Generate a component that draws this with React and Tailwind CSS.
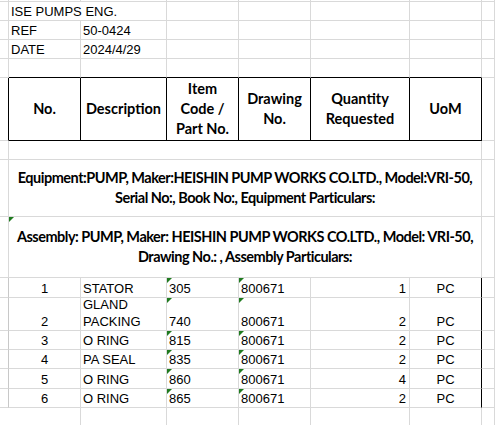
import React from "react";

const line = "border-[#d9d9d9]";

const Flag = () => (
  <span className="absolute left-0 top-0 h-0 w-0 border-t-[5px] border-r-[5px] border-t-[#1f7a1f] border-r-transparent" />
);

const rows = [
  { no: "1", desc: ["STATOR"], code: "305", dwg: "800671", qty: "1", uom: "PC" },
  { no: "2", desc: ["GLAND", "PACKING"], code: "740", dwg: "800671", qty: "2", uom: "PC" },
  { no: "3", desc: ["O RING"], code: "815", dwg: "800671", qty: "2", uom: "PC" },
  { no: "4", desc: ["PA SEAL"], code: "835", dwg: "800671", qty: "2", uom: "PC" },
  { no: "5", desc: ["O RING"], code: "860", dwg: "800671", qty: "4", uom: "PC" },
  { no: "6", desc: ["O RING"], code: "865", dwg: "800671", qty: "2", uom: "PC" },
];

const heads = [
  ["No."],
  ["Description"],
  ["Item", "Code /", "Part No."],
  ["Drawing", "No."],
  ["Quantity", "Requested"],
  ["UoM"],
];

export default function App() {
  const sans = { fontFamily: '"Liberation Sans", Arial, sans-serif' };
  const bold = { fontFamily: 'Lato, "Open Sans", sans-serif' };

  return (
    <div
      className="grid h-[425px] w-[495px] overflow-hidden bg-white text-[13px] text-black grid-cols-[9px_72px_86px_72px_72px_99px_72px_1fr] grid-rows-[2px_19px_19px_19px_19px_63px_19px_57px_61px_20px_33px_19px_19px_20px_19px_19px]"
      style={sans}
    >
      {/* spacer row */}
      {Array.from({ length: 8 }).map((_, i) => (
        <div key={"s" + i} className={`border-b border-r ${line}`} />
      ))}

      {/* title rows */}
      <div className={`border-b border-r ${line}`} />
      <div className={`col-span-2 flex items-end border-b border-r ${line} pl-[2px] leading-[17px] whitespace-nowrap`}>
        ISE PUMPS ENG.
      </div>
      {Array.from({ length: 5 }).map((_, i) => (
        <div key={"t" + i} className={`border-b border-r ${line}`} />
      ))}

      {[
        ["REF", "50-0424"],
        ["DATE", "2024/4/29"],
      ].map(([k, v]) => (
        <React.Fragment key={k}>
          <div className={`border-b border-r ${line}`} />
          <div className={`flex items-end border-b border-r ${line} pl-[2px] leading-[17px]`}>{k}</div>
          <div className={`flex items-end border-b border-r ${line} pl-[2px] leading-[17px]`}>{v}</div>
          {Array.from({ length: 5 }).map((_, i) => (
            <div key={i} className={`border-b border-r ${line}`} />
          ))}
        </React.Fragment>
      ))}

      {/* empty row above header */}
      <div className={`border-b border-r ${line}`} />
      {Array.from({ length: 6 }).map((_, i) => (
        <div key={"e" + i} className={`border-b border-r ${line} border-b-black`} />
      ))}
      <div className={`border-b border-r ${line}`} />

      {/* header */}
      <div className={`border-b border-r ${line} border-r-black`} />
      {heads.map((h, i) => (
        <div
          key={"h" + i}
          className="flex flex-col items-center justify-center border-b border-r border-black text-center text-[14.5px] font-bold leading-[20px]"
          style={bold}
        >
          {h.map((t) => (
            <span key={t}>{t}</span>
          ))}
        </div>
      ))}
      <div className={`border-b border-r ${line}`} />

      {/* blank merged row */}
      <div className={`border-b border-r ${line}`} />
      <div className={`col-span-6 border-b border-r ${line}`} />
      <div className={`border-b border-r ${line}`} />

      {/* equipment */}
      <div className={`border-b border-r ${line}`} />
      <div
        className={`col-span-6 flex flex-col items-center justify-center border-b border-r ${line} text-center text-[14.5px] font-bold leading-[20px] tracking-[-0.5px] whitespace-nowrap`}
        style={bold}
      >
        <span>Equipment:PUMP, Maker:HEISHIN PUMP WORKS CO.LTD., Model:VRI-50,</span>
        <span>Serial No:, Book No:, Equipment Particulars:</span>
      </div>
      <div className={`border-b border-r ${line}`} />

      {/* assembly */}
      <div className={`border-b border-r ${line}`} />
      <div
        className={`relative col-span-6 flex flex-col items-center justify-center border-b border-r ${line} text-center text-[14.5px] font-bold leading-[20px] tracking-[-0.5px] whitespace-nowrap`}
        style={bold}
      >
        <Flag />
        <span>Assembly: PUMP, Maker: HEISHIN PUMP WORKS CO.LTD., Model: VRI-50,</span>
        <span>Drawing No.: , Assembly Particulars:</span>
      </div>
      <div className={`border-b border-r ${line}`} />

      {/* items */}
      {rows.map((r) => (
        <React.Fragment key={r.no}>
          <div className={`border-b border-r ${line} border-r-[#c8c8c8]`} />
          <div className={`flex items-end justify-center border-b border-r ${line} leading-[17px]`}>{r.no}</div>
          <div className={`flex flex-col justify-end border-b border-r ${line} pl-[2px] leading-[17px]`}>
            {r.desc.map((d) => (
              <span key={d}>{d}</span>
            ))}
          </div>
          <div className={`relative flex items-end border-b border-r ${line} pl-[2px] leading-[17px]`}>
            <Flag />
            {r.code}
          </div>
          <div className={`relative flex items-end border-b border-r ${line} pl-[2px] leading-[17px]`}>
            <Flag />
            {r.dwg}
          </div>
          <div className={`flex items-end justify-end border-b border-r ${line} pr-[3px] leading-[17px]`}>{r.qty}</div>
          <div className={`flex items-end justify-center border-b border-r ${line} border-r-black leading-[17px]`}>{r.uom}</div>
          <div className={`border-b border-r ${line}`} />
        </React.Fragment>
      ))}

      {/* trailing row */}
      <div className={`border-b ${line}`} />
      {Array.from({ length: 7 }).map((_, i) => (
        <div key={"z" + i} className={`border-b border-r ${line}`} />
      ))}
    </div>
  );
}
